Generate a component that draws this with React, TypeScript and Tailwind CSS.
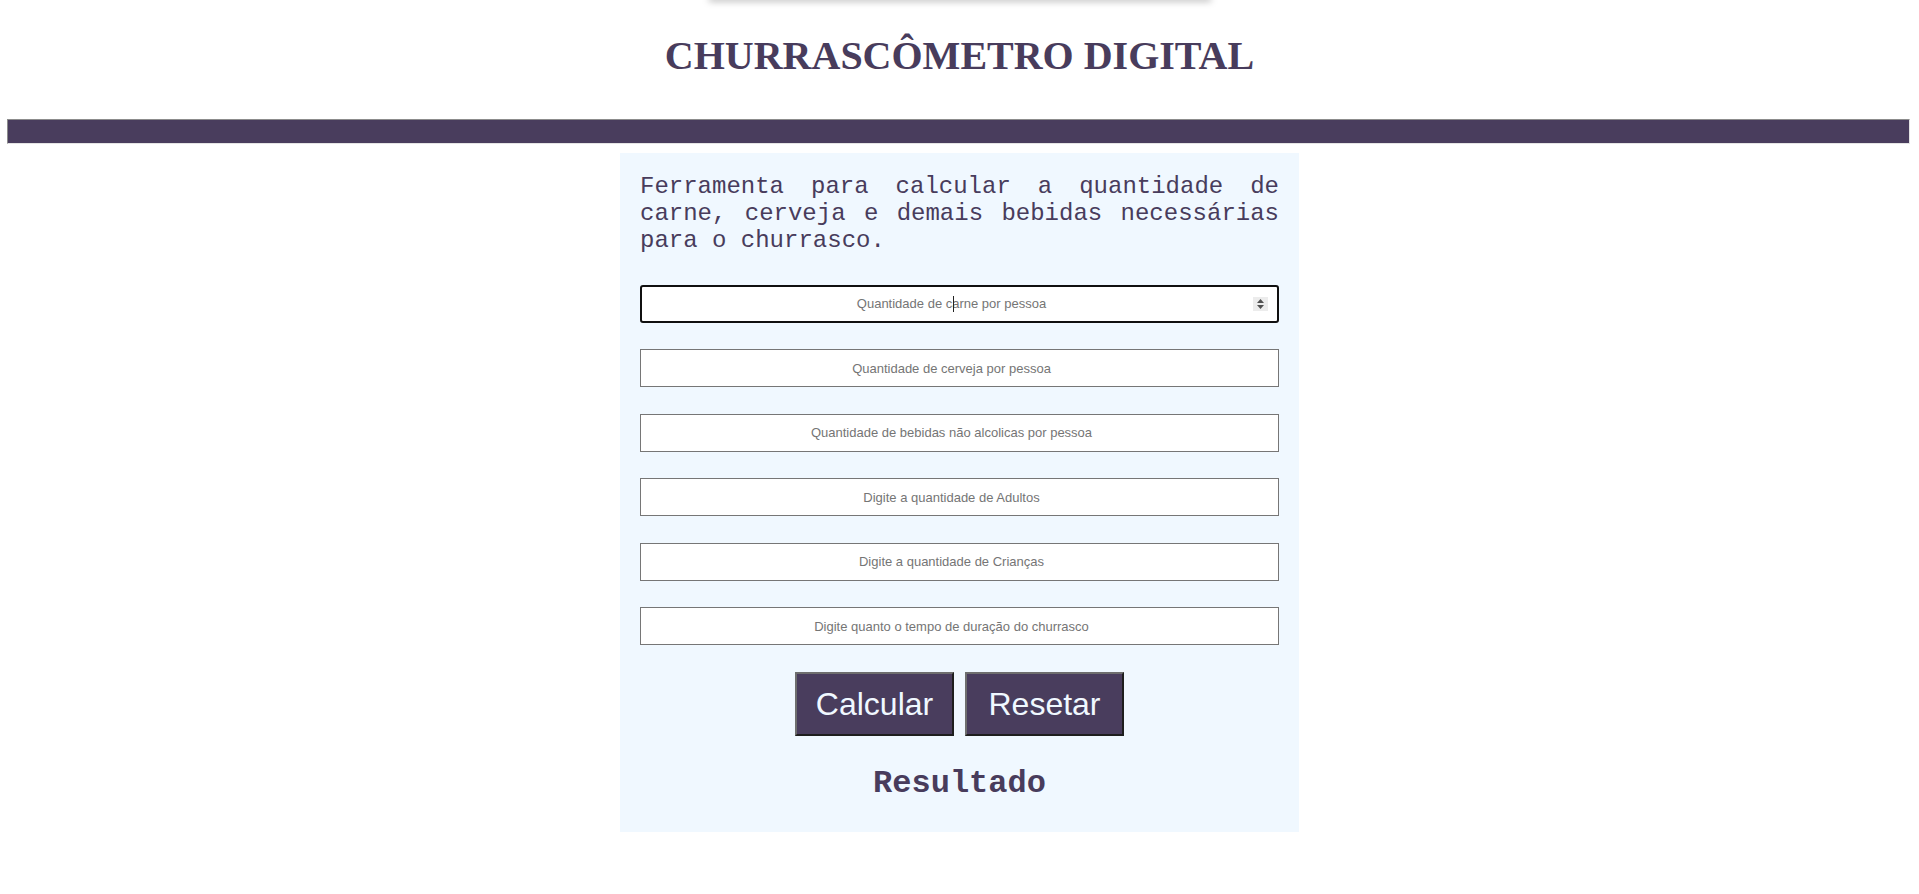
import React from "react";

const fields = [
  "Quantidade de carne por pessoa",
  "Quantidade de cerveja por pessoa",
  "Quantidade de bebidas não alcolicas por pessoa",
  "Digite a quantidade de Adultos",
  "Digite a quantidade de Crianças",
  "Digite quanto o tempo de duração do churrasco",
];

const Spinner = () => (
  <span className="absolute right-[11px] top-1/2 flex h-[14px] w-[15px] -translate-y-1/2 items-center justify-center bg-[#ececec]">
    <svg width="9" height="12" viewBox="0 0 9 12">
      <path d="M4.5 1 L8 5 L1 5 Z" fill="#505050" />
      <path d="M4.5 11 L8 7 L1 7 Z" fill="#505050" />
    </svg>
  </span>
);

const btn =
  "h-[64px] w-[159px] border-2 border-t-[#6e6e6e] border-l-[#6e6e6e] border-b-[#1e1e1e] border-r-[#1e1e1e] bg-[#493d5d] font-['Liberation_Sans',Arial,sans-serif] text-[32px] text-[#f0f8ff]";

const App = () => {
  return (
    <div className="min-h-screen bg-white">
      <div className="mx-auto -mt-[4px] h-[4px] w-[502px] bg-white shadow-[0_1px_7px_rgba(0,0,0,0.35)]" />

      <h1 className="pt-[33px] text-center font-['Liberation_Serif',serif] text-[40px] font-bold leading-[46px] text-[#483c5c]">
        CHURRASCÔMETRO DIGITAL
      </h1>

      <div className="mt-[40px] ml-[7px] mr-[9px] h-[25px] border border-t-[#8c8c8c] border-l-[#8c8c8c] border-b-[#e4e4e4] border-r-[#e4e4e4] bg-[#493d5d]" />

      <div className="mx-auto mt-[9px] w-[679px] bg-[#f0f8ff] px-5 pt-5 pb-[30px]">
        <p className="text-justify font-['Liberation_Mono',monospace] text-[24px] leading-[27.2px] text-[#483c5c]">
          Ferramenta para calcular a quantidade de carne, cerveja e demais
          bebidas necessárias para o churrasco.
        </p>

        <div className="mt-[30px] flex flex-col gap-[26.5px]">
          {fields.map((f, i) => (
            <div key={f} className="relative">
              <input
                type="text"
                inputMode="numeric"
                placeholder={f}
                className={
                  i === 0
                    ? "h-[38px] w-full rounded-[3px] border-2 border-[#101010] bg-white pl-[1px] pr-[17px] text-center font-['Liberation_Sans',Arial,sans-serif] text-[13px] text-[#222] placeholder:text-[#757575] outline-none"
                    : "h-[38px] w-full border border-[#767676] bg-white pl-[2px] pr-[18px] text-center font-['Liberation_Sans',Arial,sans-serif] text-[13px] text-[#222] placeholder:text-[#757575] outline-none"
                }
              />
              {i === 0 && (
                <>
                  <span className="absolute left-[313px] top-[11px] h-[16px] w-px bg-[#222]" />
                  <Spinner />
                </>
              )}
            </div>
          ))}
        </div>

        <div className="mt-[27px] flex justify-center gap-[11px]">
          <button className={btn}>Calcular</button>
          <button className={btn}>Resetar</button>
        </div>

        <h2 className="mt-[30px] text-center font-['Liberation_Mono',monospace] text-[32px] font-bold leading-[36px] text-[#483c5c]">
          Resultado
        </h2>
      </div>
    </div>
  );
};

export default App;
